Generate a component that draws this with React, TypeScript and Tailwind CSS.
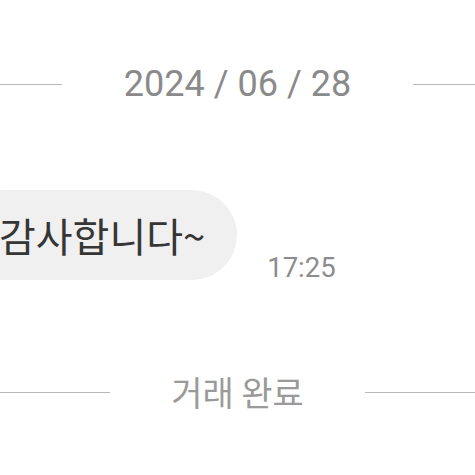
import React from "react";

export default function App() {
  return (
    <div className="w-[475px] h-[475px] bg-white overflow-hidden flex flex-col">
      <div className="mt-[62px] flex items-center gap-[62px]">
        <div className="flex-1 h-px bg-[#b8b8b8]" />
        <div className="text-[36px] leading-[44px] text-[#8a8a8a] font-['Roboto',sans-serif] whitespace-nowrap">
          2024 / 06 / 28
        </div>
        <div className="flex-1 h-px bg-[#b8b8b8]" />
      </div>

      <div className="mt-[84px] flex items-end">
        <div className="-ml-[40px] h-[90px] pl-[39px] pr-[32px] flex items-center bg-[#f0f0f0] rounded-[45px]">
          <span className="text-[40px] leading-[48px] text-[#363636] font-['Noto_Sans_CJK_KR',sans-serif] whitespace-nowrap">
            감사합니다~
          </span>
        </div>
        <div className="ml-[30px] -mb-[3px] text-[27.5px] leading-[30px] text-[#8c8c8c] font-['Roboto',sans-serif]">
          17:25
        </div>
      </div>

      <div className="mt-[90px] flex items-center gap-[61px]">
        <div className="flex-1 h-px bg-[#b8b8b8]" />
        <div className="text-[34px] leading-[44px] text-[#9a9a9a] font-['Noto_Sans_CJK_KR',sans-serif] whitespace-nowrap">
          거래 완료
        </div>
        <div className="flex-1 h-px bg-[#b8b8b8]" />
      </div>
    </div>
  );
}
